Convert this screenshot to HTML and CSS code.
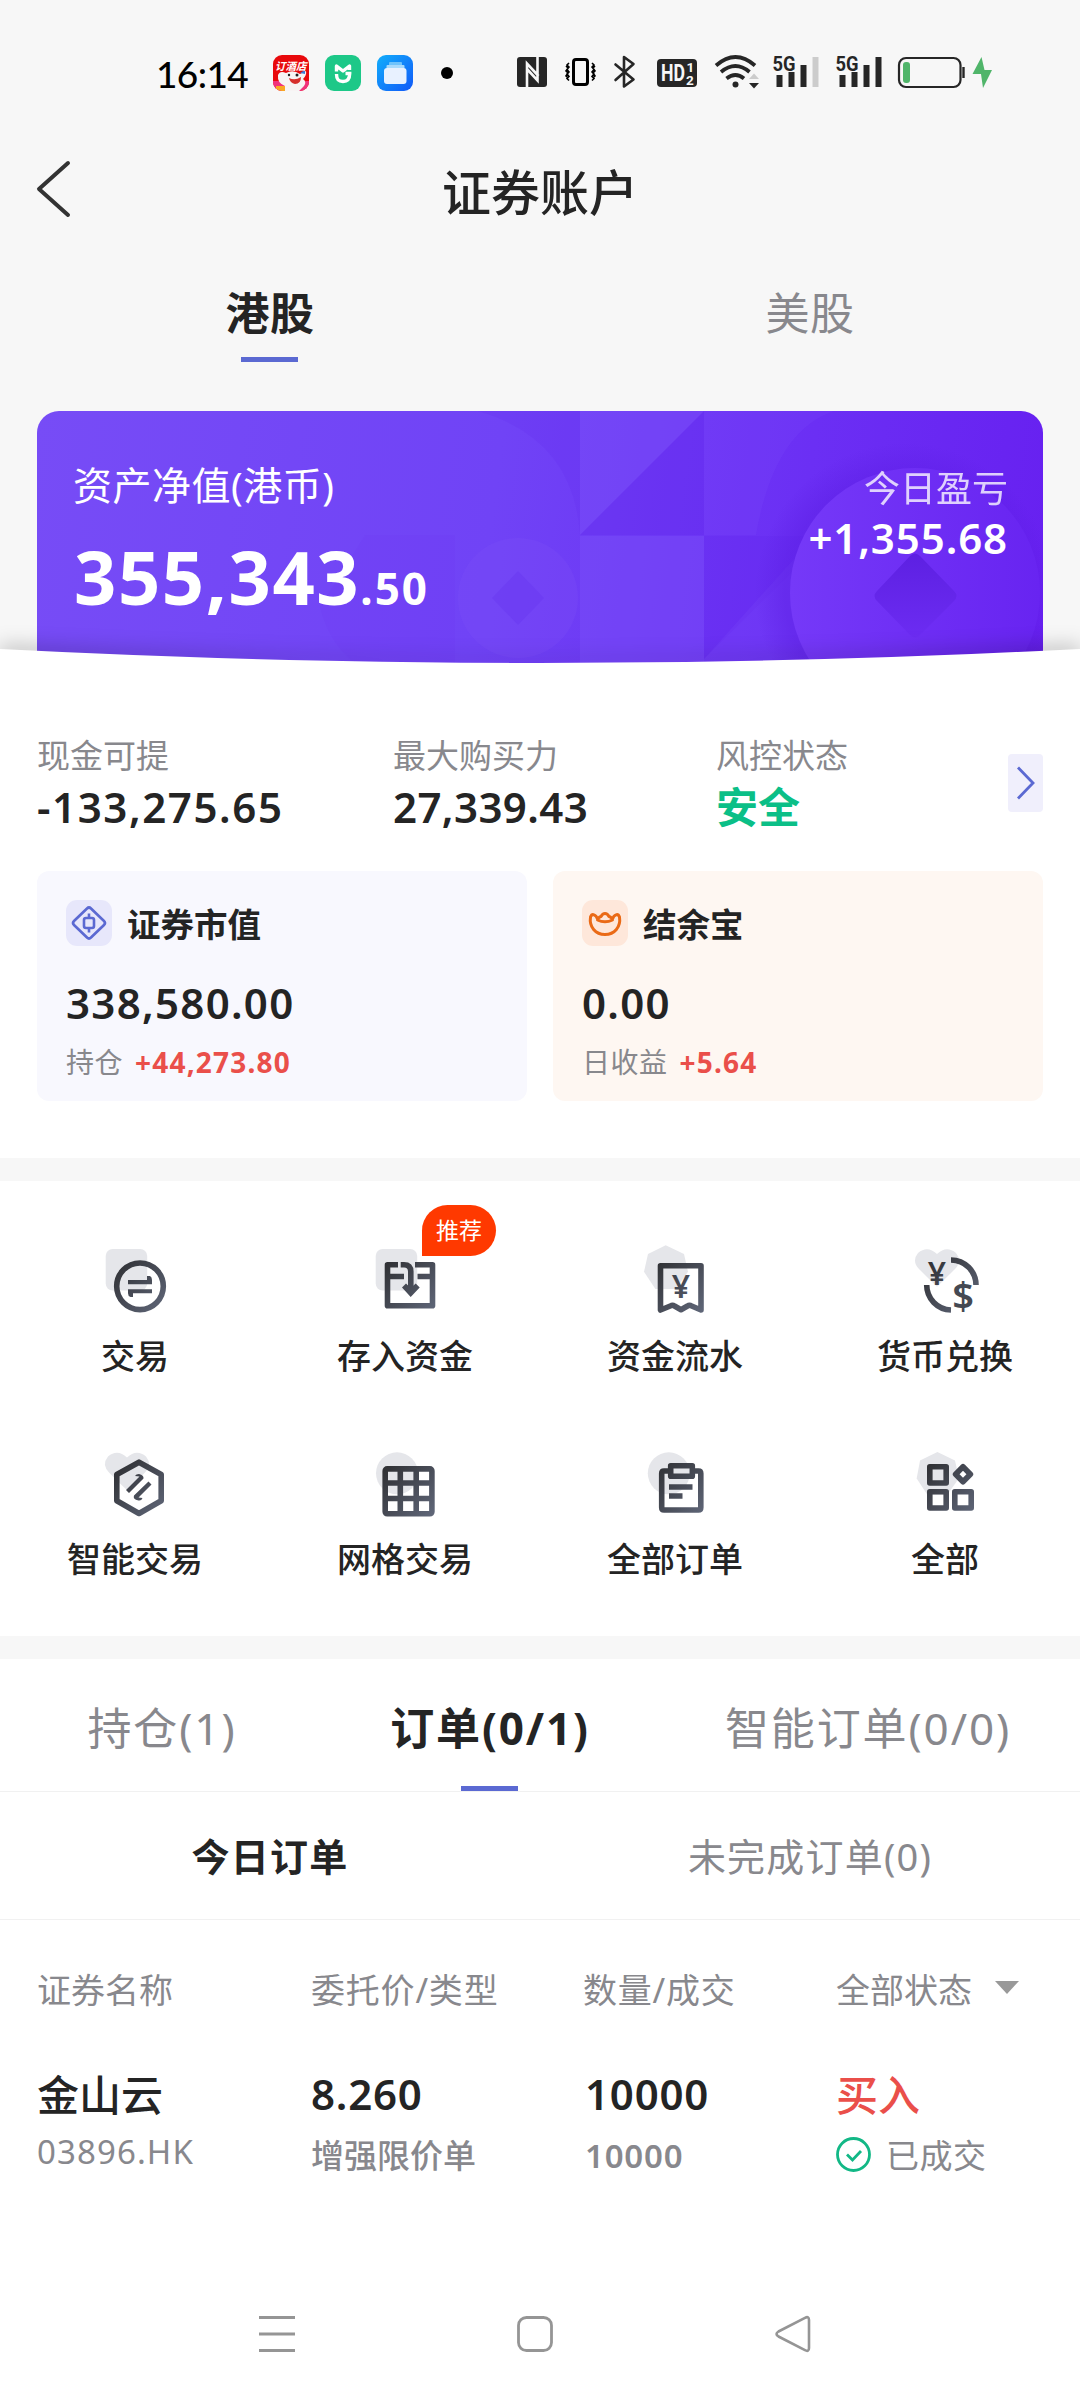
FILE: index.html
```html
<!DOCTYPE html>
<html lang="zh-CN">
  <head>
    <meta charset="UTF-8" />
    <meta name="viewport" content="width=device-width, initial-scale=1.0" />
    <title>证券账户</title>
    <link rel="stylesheet" href="styles.css">
  </head>
  <body>
    <!-- shared gradient for the menu icons -->
    <svg class="defs" width="0" height="0">
      <defs>
        <linearGradient id="ink" gradientUnits="userSpaceOnUse" x1="26" y1="26" x2="74" y2="70">
          <stop offset="0" stop-color="#313236" />
          <stop offset="1" stop-color="#5f6678" />
        </linearGradient>
      </defs>
    </svg>

    <div class="status-bar">
      <span class="time">16:14</span>
      <svg class="apps" width="188" height="40" viewBox="0 0 188 40">
        <defs>
          <linearGradient id="files" x1="0" y1="0" x2="1" y2="1">
            <stop offset="0" stop-color="#12aefb" />
            <stop offset="1" stop-color="#1159f8" />
          </linearGradient>
          <clipPath id="appClip"><rect x="0" y="2" width="36" height="36" rx="9" /></clipPath>
        </defs>
        <g clip-path="url(#appClip)">
          <rect y="2" width="36" height="36" fill="#e8090c" />
          <rect y="28" width="36" height="10" fill="#f0337c" />
          <path d="M5 22 Q7 17 13 20 Q20 16 27 21 L33 18 Q34 22 30 26 Q34 29 31 33 L26 38 H9 L12 33 Q4 30 5 22Z" fill="#f7f4f4" />
          <path d="M16 25 Q22 28 28 24 Q28 31 22 31 Q17 30 16 25Z" fill="#d6302c" />
          <circle cx="16" cy="22" r="1.2" fill="#222" />
          <circle cx="24" cy="22" r="1.5" fill="#222" />
          <path d="M3 33h9v5H3z" fill="#f9a825" />
          <path d="M27 20l5-3v4z" fill="#3d7bd8" />
        </g>
        <text x="2" y="17" class="app-text">订酒店</text>
        <rect x="52" y="2" width="36" height="36" rx="9" fill="#1dc888" />
        <path d="M63.500 18.500V13l6.500 5 6.500-5v4" fill="none" stroke="#fff" stroke-width="3.400" stroke-linejoin="round" />
        <path d="M63.500 21c0 6 2.200 7.500 6.500 7.500s6.700-2.500 6.700-8h-4.200" fill="none" stroke="#fff" stroke-width="3.400" />
        <rect x="104" y="2" width="36" height="36" rx="9" fill="url(#files)" />
        <rect x="116" y="9" width="13" height="4" rx="1" fill="#6fc3fb" />
        <rect x="113.500" y="12" width="18" height="4" rx="1" fill="#a8dafc" />
        <rect x="111" y="15" width="22.500" height="16" rx="3" fill="#e8f1ff" />
        <circle cx="174" cy="20" r="6" fill="#000" />
      </svg>

      <svg class="signals" width="480" height="50" viewBox="0 -5 480 50">
        <!-- nfc -->
        <rect x="4" y="4" width="30" height="30" rx="3" fill="#262626" />
        <path d="M14 34V10.500L25.500 23M24.500 4v23.500L14 16" fill="none" stroke="#f7f7f7" stroke-width="2.600" />
        <!-- vibrate -->
        <rect x="60.500" y="6.500" width="14" height="25" rx="2.500" fill="none" stroke="#000" stroke-width="3" />
        <path d="M56 10l-2 2 2 2-2 2.500 2 2.500-2 2 2 2.500-2 2 2 2M53 13l2 2-2 3 2 2-2 3 2 2M79 10l2 2-2 2 2 2.500-2 2.500 2 2-2 2.500 2 2-2 2M82 13l-2 2 2 3-2 2 2 3-2 2" fill="none" stroke="#000" stroke-width="1.600" />
        <!-- bluetooth -->
        <path d="M102.500 11.500l18 15-9.500 7V4l9.500 7-18 16" fill="none" stroke="#262626" stroke-width="2.600" stroke-linejoin="round" stroke-linecap="round" />
        <!-- hd -->
        <rect x="144" y="6" width="40" height="28" rx="4" fill="#262626" />
        <text x="148" y="28" class="hd" textLength="24" lengthAdjust="spacingAndGlyphs">HD</text>
        <text x="173.500" y="19" class="hd-small">1</text>
        <text x="173" y="31.500" class="hd-small">2</text>
        <!-- wifi -->
        <g fill="none" stroke="#262626" stroke-width="3.800">
          <path d="M203 12.500q19.500-17 39 0" />
          <path d="M208 19q14.500-12 28.500 0" />
          <path d="M213.500 25.500q9-7 17.500 0" />
        </g>
        <circle cx="222.500" cy="31.500" r="3" fill="#262626" />
        <path d="M236 26l5-5.500 5 5.500z" fill="#ccc" />
        <path d="M236 30l5 5.500 5-5.500z" fill="#262626" />
        <!-- sim 1 -->
        <text x="259.500" y="17.500" class="net" textLength="23" lengthAdjust="spacingAndGlyphs">5G</text>
        <path d="M263.500 22h6v12h-6zM275.500 19h6v15h-6zM287.500 12h6v22h-6z" fill="#262626" />
        <path d="M299.500 4h6v30h-6z" fill="#ccc" />
        <!-- sim 2 -->
        <text x="322.500" y="17.500" class="net" textLength="23" lengthAdjust="spacingAndGlyphs">5G</text>
        <path d="M326.500 22h6v12h-6zM338.500 19h6v15h-6zM350.500 12h6v22h-6zM362.500 4h6v30h-6z" fill="#262626" />
        <!-- battery -->
        <rect x="386" y="5" width="61.500" height="29" rx="7" fill="none" stroke="#262626" stroke-width="2.200" />
        <rect x="390" y="9" width="7" height="21" rx="3" fill="#50b56a" />
        <path d="M450.500 14v11" stroke="#262626" stroke-width="2.400" />
        <path d="M468.500 4l-9 17h8.500l2 14 9-18h-7.500z" fill="#50b56a" />
      </svg>
    </div>

    <div class="navbar">
      <svg class="back" width="40" height="64" viewBox="0 0 40 64">
        <path d="M33 6L4 32l29 26" fill="none" stroke="#333" stroke-width="4" stroke-linecap="round" stroke-linejoin="round" />
      </svg>
      <h1>证券账户</h1>
    </div>

    <div class="market-tabs">
      <div class="tab active">港股</div>
      <div class="tab">美股</div>
    </div>

    <div class="hero">
      <svg class="pattern" width="1006" height="256" viewBox="0 0 1006 256">
        <defs>
          <linearGradient id="coin" x1="0" y1="0" x2="1" y2="0">
            <stop offset="0" stop-color="#7539f8" />
            <stop offset="1" stop-color="#6824f1" />
          </linearGradient>
          <radialGradient id="coinShade" cx=".5" cy=".5" r=".5">
            <stop offset=".8" stop-color="#5a1ce2" stop-opacity=".4" />
            <stop offset="1" stop-color="#5a1ce2" stop-opacity="0" />
          </radialGradient>
          <linearGradient id="gem" x1="0" y1="0" x2="0" y2="1">
            <stop offset="0" stop-color="#5d20e2" />
            <stop offset="1" stop-color="#6c2cf2" />
          </linearGradient>
        </defs>
        <path d="M283 196q10 40 40 60h95v-132h-90z" fill="#6a35f0" opacity=".12" />
        <path d="M441 0h102v124q-6-96-102-124z" fill="#5d22ea" opacity=".13" />
        <path d="M543 0h124L543 124z" fill="#7d55f8" opacity=".35" />
        <path d="M667 0v124H543z" fill="#5c1fe8" opacity=".2" />
        <path d="M667 0h130q-60 20-78 124h-52z" fill="#7d4bf8" opacity=".2" />
        <circle cx="481" cy="187" r="60" fill="#8359f8" opacity=".18" />
        <path d="M481 160l26 27-26 27-26-27z" fill="#6030ec" opacity=".28" />
        <path d="M543 125h124v131H543z" fill="#7f55f8" opacity=".35" />
        <path d="M667 125h124L667 248z" fill="#5c1fe8" opacity=".14" />
        <path d="M667 248l90-100 26 108H667z" fill="#7f50f8" opacity=".2" />
        <circle cx="868" cy="182" r="150" fill="url(#coinShade)" />
        <circle cx="878" cy="182" r="125" fill="url(#coin)" />
        <path d="M873 145q5-5 10 0l34 35q5 5 0 10l-34 34q-5 5-10 0l-33-34q-5-5 0-10z" fill="url(#gem)" />
      </svg>
      <div class="asset">
        <p class="asset-label">资产净值(港币)</p>
        <p class="asset-value">355,343<small>.50</small></p>
      </div>
      <div class="profit">
        <p class="profit-label">今日盈亏</p>
        <p class="profit-value">+1,355.68</p>
      </div>
    </div>

    <svg class="curve" width="1080" height="20" viewBox="0 0 1080 20">
      <path d="M0 2Q540 30 1080 2V20H0z" fill="#fff" />
    </svg>

    <div class="summary">
      <div class="stats">
        <div class="stat cash">
          <p class="label">现金可提</p>
          <p class="value">-133,275.65</p>
        </div>
        <div class="stat power">
          <p class="label">最大购买力</p>
          <p class="value">27,339.43</p>
        </div>
        <div class="stat risk">
          <p class="label">风控状态</p>
          <p class="value safe">安全</p>
        </div>
        <div class="more">
          <svg width="35" height="58" viewBox="0 0 35 58">
            <path d="M10 13.500L25 29 10 44.500" fill="none" stroke="#5b69d2" stroke-width="2.800" />
          </svg>
        </div>
      </div>

      <div class="cards">
        <div class="card purple">
          <div class="card-title">
            <svg width="46" height="46" viewBox="0 0 46 46">
              <rect width="46" height="46" rx="11" fill="#e7e7fb" />
              <path d="M21 8.500q2-2 4 0l13 12.500q2 2 0 4L25 37.500q-2 2-4 0L8 25q-2-2 0-4z" fill="none" stroke="#5b69d2" stroke-width="2.600" />
              <rect x="18" y="18" width="10" height="10" rx="2" fill="none" stroke="#5b69d2" stroke-width="2.600" />
              <path d="M23 13.500V18M23 28v4.500" stroke="#5b69d2" stroke-width="2.600" />
            </svg>
            <span>证券市值</span>
          </div>
          <p class="card-value">338,580.00</p>
          <p class="card-foot">持仓<b>+44,273.80</b></p>
        </div>
        <div class="card orange">
          <div class="card-title">
            <svg width="46" height="46" viewBox="0 0 46 46">
              <rect width="46" height="46" rx="11" fill="#fee7da" />
              <path d="M15.500 19C14 14.500 10 13 8.500 17 7 27 13.500 34.500 23 34.500S39 27 37.500 17C36 13 32 14.500 30.500 19" fill="none" stroke="#ea6a16" stroke-width="3" />
              <path d="M15.500 20q1-3 3.500-3.500Q20.500 13.500 23 13.500t4 3q2.500.5 3.500 3.500-7.500 3.500-15 0z" fill="none" stroke="#ea6a16" stroke-width="3" stroke-linejoin="round" />
            </svg>
            <span>结余宝</span>
          </div>
          <p class="card-value">0.00</p>
          <p class="card-foot">日收益<b>+5.64</b></p>
        </div>
      </div>
    </div>

    <div class="menu">
      <div class="menu-item">
        <svg viewBox="0 0 90 90">
          <rect x="15.700" y="9" width="41.500" height="41.500" rx="7" class="shade" />
          <circle cx="50" cy="46.300" r="23.300" class="line" />
          <path d="M38 40h19v-4h3q2 1 2 4v4.200H38zM62 49.300H38v4q0 3 2.500 3.700H43v-3.700h19z" class="solid" />
        </svg>
        <span>交易</span>
      </div>
      <div class="menu-item">
        <svg viewBox="0 0 90 90">
          <rect x="15.700" y="9" width="41.500" height="41.500" rx="7" class="shade" />
          <path d="M38 24.700H27.500v41H72.500v-41H55M30 36.500h14M57.500 36.500H70" class="line" />
          <path d="M40.700 24.700H44q6.800 0 6.800 7V51" class="line" />
          <path d="M42 47.500l4-4 4.700 4.500 5-4.500 4 4-9 9.500z" class="solid" />
        </svg>
        <span>存入资金</span>
        <em class="badge">推荐</em>
      </div>
      <div class="menu-item">
        <svg viewBox="0 0 90 90">
          <path d="M35.700 5.300L54 14l4 17.700L46 49H25.400L14 31.700 18 14z" class="shade" />
          <path d="M30.500 70V25.700H71V70L60.500 65.500q-1.500-.5-3 .5l-6.500 3.700-6.500-3.700q-1.500-1-3-.5z" class="line" />
          <text x="51" y="57.700" class="symbol" text-anchor="middle">¥</text>
        </svg>
        <span>资金流水</span>
      </div>
      <div class="menu-item">
        <svg viewBox="0 0 90 90">
          <path d="M37 46.700Q33 43 19 29q-7.500-8-1-16 9.500-8 19 1 9.500-9 19-1 6.500 8-1 16-14 14-18 17.700z" class="shade" />
          <path d="M51 20a25 25 0 0 1 25 25M26.700 45A25 25 0 0 0 51 70" class="line" />
          <text x="37" y="44.700" class="symbol" text-anchor="middle">¥</text>
          <text x="63" y="69.500" class="symbol dollar" text-anchor="middle">$</text>
        </svg>
        <span>货币兑换</span>
      </div>
      <div class="menu-item">
        <svg viewBox="0 0 90 90">
          <path d="M37 47Q33 43.500 19 29.500q-7.500-8-1-16 9.500-8 19 1 9.500-9 19-1 6.500 8-1 16-14 14-18 17.500z" class="shade" />
          <path d="M49 19.200L71.200 31.500V57.700L49 70.500 26.800 57.700V31.500z" class="line" />
          <path d="M36 47l13.500-13.500-4.500-.5q1-2 4-2 5 1 4.500 4.500L39 50zM58.500 38.500l3 3-13 13 4 .5q-1 3-4 2.500-6-1-4.500-5z" class="solid" />
        </svg>
        <span>智能交易</span>
      </div>
      <div class="menu-item">
        <svg viewBox="0 0 90 90">
          <circle cx="37" cy="30.300" r="21" class="shade" />
          <rect x="25.200" y="25.900" width="46.700" height="44.900" rx="2" class="line" />
          <path d="M40.300 26v44M56.200 26v44M26 40h45M26 55.500h45" class="line" />
        </svg>
        <span>网格交易</span>
      </div>
      <div class="menu-item">
        <svg viewBox="0 0 90 90">
          <circle cx="38.800" cy="30.300" r="21" class="shade" />
          <path d="M39 28h-5q-2.300 0-2.300 2.500v34q0 2.500 2.300 2.500h34.500q2.300 0 2.300-2.500v-34q0-2.500-2.300-2.500H64" class="line" />
          <rect x="40.700" y="22.700" width="21.600" height="10.600" class="line" />
          <path d="M39 41.300h23.500v5.500H39zM39 50.300h13.500v5.500H39z" class="solid" />
        </svg>
        <span>全部订单</span>
      </div>
      <div class="menu-item">
        <svg viewBox="0 0 90 90">
          <path d="M37.400 9L55 17.500l4 17.700L47 52H27.500L16.700 35.500 20 17.500z" class="shade" />
          <rect x="29.800" y="23.800" width="16.400" height="16.200" class="line" />
          <rect x="29.800" y="48.800" width="16.400" height="16.200" class="line" />
          <rect x="54.800" y="48.800" width="16.400" height="16.200" class="line" />
          <path d="M63 23.800l7.400 7.400-7.400 7.500-7.400-7.500z" class="line" />
        </svg>
        <span>全部</span>
      </div>
    </div>

    <div class="orders">
      <div class="order-tabs">
        <div class="order-tab hold">持仓(1)</div>
        <div class="order-tab order active">订单(0/1)</div>
        <div class="order-tab smart">智能订单(0/0)</div>
      </div>
      <div class="sub-tabs">
        <div class="sub-tab active">今日订单</div>
        <div class="sub-tab">未完成订单(0)</div>
      </div>
      <div class="row head">
        <span>证券名称</span>
        <span class="wide">委托价/类型</span>
        <span class="wide">数量/成交</span>
        <span class="filter">全部状态<i class="caret"></i></span>
      </div>
      <div class="row main">
        <span>金山云</span>
        <span class="price">8.260</span>
        <span class="num">10000</span>
        <span class="buy">买入</span>
      </div>
      <div class="row sub">
        <span class="code">03896.HK</span>
        <span>增强限价单</span>
        <span class="num">10000</span>
        <span class="done">
          <svg width="36" height="36" viewBox="0 0 36 36">
            <circle cx="17.500" cy="17.500" r="16" fill="none" stroke="#12b886" stroke-width="2.800" />
            <path d="M11 17.500l5.500 5.500L25 14" fill="none" stroke="#12b886" stroke-width="2.800" />
          </svg>
          已成交
        </span>
      </div>
    </div>

    <div class="system-nav">
      <svg width="40" height="40" viewBox="0 0 40 40">
        <path d="M2 3.500h36M2 20h36M2 36.500h36" stroke="#959595" stroke-width="3" />
      </svg>
      <svg width="40" height="40" viewBox="0 0 40 40">
        <rect x="3.500" y="3.500" width="33" height="33" rx="8" fill="none" stroke="#959595" stroke-width="2.800" />
      </svg>
      <svg width="40" height="40" viewBox="0 0 40 40">
        <path d="M32 3.800Q36 1.800 36 6V34Q36 38.200 32 36.200L5.500 22.500Q1.500 20 5.500 17.500z" fill="none" stroke="#959595" stroke-width="2.600" />
      </svg>
    </div>
  </body>
</html>
```
FILE: styles.css
```css
* {
  margin: 0;
  padding: 0;
  box-sizing: border-box;
}

body {
  width: 1080px;
  height: 2400px;
  overflow: hidden;
  background: #f7f7f7;
  color: #242424;
  font-family: "Noto Sans", "Noto Sans CJK SC", sans-serif;
  font-size: 33px;
  line-height: 1;
  white-space: nowrap;
}

svg {
  display: block;
  flex-shrink: 0;
}

.defs {
  position: absolute;
}

/* status bar */
.status-bar {
  height: 146px;
  padding-left: 156px;
  display: flex;
  align-items: center;
}

.time {
  width: 117px;
  font-family: Lato, sans-serif;
  font-size: 37px;
  font-weight: 500;
  letter-spacing: -.6px;
  color: #000;
}

.signals {
  margin-left: 52px;
}

.app-text {
  font-family: "Noto Sans CJK SC", sans-serif;
  font-size: 10.5px;
  font-weight: 700;
  font-style: italic;
  fill: #fff;
}

.hd, .hd-small, .net {
  font-family: Roboto, sans-serif;
  font-weight: 700;
}

.hd {
  font-size: 23px;
  fill: #f7f7f7;
}

.hd-small {
  font-size: 13.5px;
  fill: #f7f7f7;
}

.net {
  font-size: 20.5px;
  fill: #262626;
}

/* title */
.navbar {
  position: relative;
  height: 92px;
  display: flex;
  justify-content: center;
  align-items: center;
}

.navbar h1 {
  font-size: 49px;
  font-weight: 500;
}

.back {
  position: absolute;
  left: 35px;
  top: 11px;
}

.market-tabs {
  height: 124px;
  display: flex;
}

.tab {
  position: relative;
  flex: 1;
  padding-top: 53px;
  text-align: center;
  font-size: 44px;
  letter-spacing: .5px;
  color: #88888d;
}

.tab.active, .order-tab.active, .sub-tab.active {
  color: #242424;
  font-weight: 700;
}

.tab.active::after, .order-tab.active::after {
  content: "";
  position: absolute;
  left: 50%;
  bottom: 0;
  width: 57px;
  height: 5px;
  margin-left: -29px;
  background: #5b69d2;
}

/* purple card */
.hero {
  position: relative;
  height: 256px;
  margin: 49px 37px 0;
  padding: 0 35px 0 36px;
  display: flex;
  justify-content: space-between;
  border-radius: 22px 22px 0 0;
  overflow: hidden;
  background: linear-gradient(98deg, #774cf6 0%, #7043f6 45%, #6b2ff4 75%, #6720f0 100%);
  color: #fff;
}

.pattern {
  position: absolute;
  left: 0;
  top: 0;
}

.asset, .profit {
  position: relative;
}

.asset-label {
  padding-top: 54px;
  font-size: 39px;
  letter-spacing: .5px;
}

.asset-value {
  margin: 36px 0 0 1px;
  font-size: 74px;
  font-weight: 700;
  letter-spacing: 1.6px;
}

.asset-value small {
  font-size: 44px;
  letter-spacing: 2px;
}

.profit {
  text-align: right;
}

.profit-label {
  padding-top: 60px;
  font-size: 36px;
  opacity: .78;
}

.profit-value {
  margin-top: 10px;
  font-size: 42px;
  font-weight: 600;
  letter-spacing: .9px;
}

.curve {
  position: relative;
  margin-top: -20px;
  filter: drop-shadow(0 -4px 10px rgba(0, 0, 0, .22));
}

/* account summary */
.summary {
  position: relative;
  height: 491px;
  padding: 71px 37px 0;
  background: #fff;
}

.stats {
  position: relative;
  height: 133px;
  display: flex;
}

.cash {
  width: 356px;
}

.cash .value {
  letter-spacing: 1.6px;
}

.power {
  width: 323px;
}

.power .value {
  letter-spacing: .4px;
}

.risk {
  width: 292px;
}

.label {
  font-size: 33px;
  line-height: 36px;
  color: #88888d;
}

.value {
  margin-top: 12px;
  font-size: 42px;
  line-height: 42px;
  font-weight: 600;
}

.safe {
  color: #0bbf87;
  font-weight: 700;
}

.more {
  width: 35px;
  height: 58px;
  margin-top: 16px;
  border-radius: 4px;
  background: #f0effc;
}

.cards {
  display: flex;
  gap: 26px;
}

.card {
  flex: 1;
  height: 230px;
  padding: 29px;
  border-radius: 12px;
}

.purple {
  background: #f8f8fe;
}

.orange {
  background: #fef7f2;
}

.card-title {
  display: flex;
  align-items: center;
  gap: 15px;
  font-size: 33.5px;
  font-weight: 700;
}

.card-title span {
  padding-top: 3px;
}

.card-value {
  margin-top: 36px;
  font-size: 42px;
  font-weight: 600;
  letter-spacing: 1.3px;
}

.card-foot {
  margin-top: 24px;
  font-size: 28px;
  letter-spacing: .5px;
  color: #88888d;
}

.card-foot b {
  margin-left: 12px;
  letter-spacing: 1.2px;
  color: #ea4f4a;
}

/* menu grid */
.menu {
  height: 455px;
  margin-top: 23px;
  padding-top: 59px;
  display: grid;
  grid-template-columns: repeat(4, 1fr);
  grid-auto-rows: 203px;
  background: #fff;
}

.menu-item {
  position: relative;
  display: flex;
  flex-direction: column;
  align-items: center;
  font-size: 34px;
  font-weight: 500;
}

.menu-item svg {
  width: 90px;
  height: 90px;
  margin-bottom: 9px;
}

.shade {
  fill: #e5e6ea;
}

.line {
  fill: none;
  stroke: url(#ink);
  stroke-width: 5.6;
  stroke-linejoin: round;
}

.solid, .symbol {
  fill: url(#ink);
}

.symbol {
  font-size: 32px;
  font-weight: 600;
}

.dollar {
  font-size: 38px;
  fill: #454952;
}

.badge {
  position: absolute;
  left: 152px;
  top: -35px;
  width: 74px;
  height: 51px;
  border-radius: 26px 26px 26px 0;
  background: #ff3900;
  color: #fff;
  font-size: 23px;
  font-style: normal;
  font-weight: 400;
  line-height: 51px;
  text-align: center;
}

/* orders */
.orders {
  height: 601px;
  margin-top: 23px;
  background: #fff;
}

.order-tabs {
  height: 133px;
  display: flex;
  border-bottom: 1px solid #f1f1f1;
}

.order-tab {
  position: relative;
  padding-top: 47px;
  text-align: center;
  font-size: 44px;
  letter-spacing: 1.9px;
  color: #88888d;
}

.hold {
  width: 324px;
}

.order {
  width: 332px;
}

.smart {
  width: 424px;
}

.sub-tabs {
  height: 128px;
  display: flex;
  align-items: center;
  border-bottom: 1px solid #f1f1f1;
}

.sub-tab {
  flex: 1;
  text-align: center;
  font-size: 38px;
  letter-spacing: 1.2px;
  color: #88888d;
}

.row {
  display: grid;
  grid-template-columns: 274px 272px 253px 1fr;
  align-items: center;
  padding-left: 37px;
}

.head {
  height: 140px;
  font-size: 34px;
  color: #88888d;
}

.wide {
  letter-spacing: .8px;
}

.filter, .done {
  display: flex;
  align-items: center;
}

.caret {
  margin: -5px 0 0 23px;
  border: 12px solid transparent;
  border-top: 13px solid #999;
  border-bottom: 0;
}

.main {
  height: 70px;
  font-size: 42px;
  font-weight: 500;
}

.price, .num {
  font-weight: 600;
  letter-spacing: .8px;
}

.main .price, .main .num {
  padding-bottom: 3px;
}

.num {
  padding-left: 2px;
}

.buy {
  color: #ea4f4a;
}

.sub {
  height: 50px;
  font-weight: 500;
  color: #88888d;
}

.code, .done {
  font-weight: 400;
}

.code {
  padding-bottom: 7px;
  letter-spacing: 1.1px;
}

.done {
  gap: 14px;
  letter-spacing: .5px;
}

.system-nav {
  height: 140px;
  padding: 54px 257px 0;
  display: flex;
  gap: 218px;
  background: #fff;
}
```
